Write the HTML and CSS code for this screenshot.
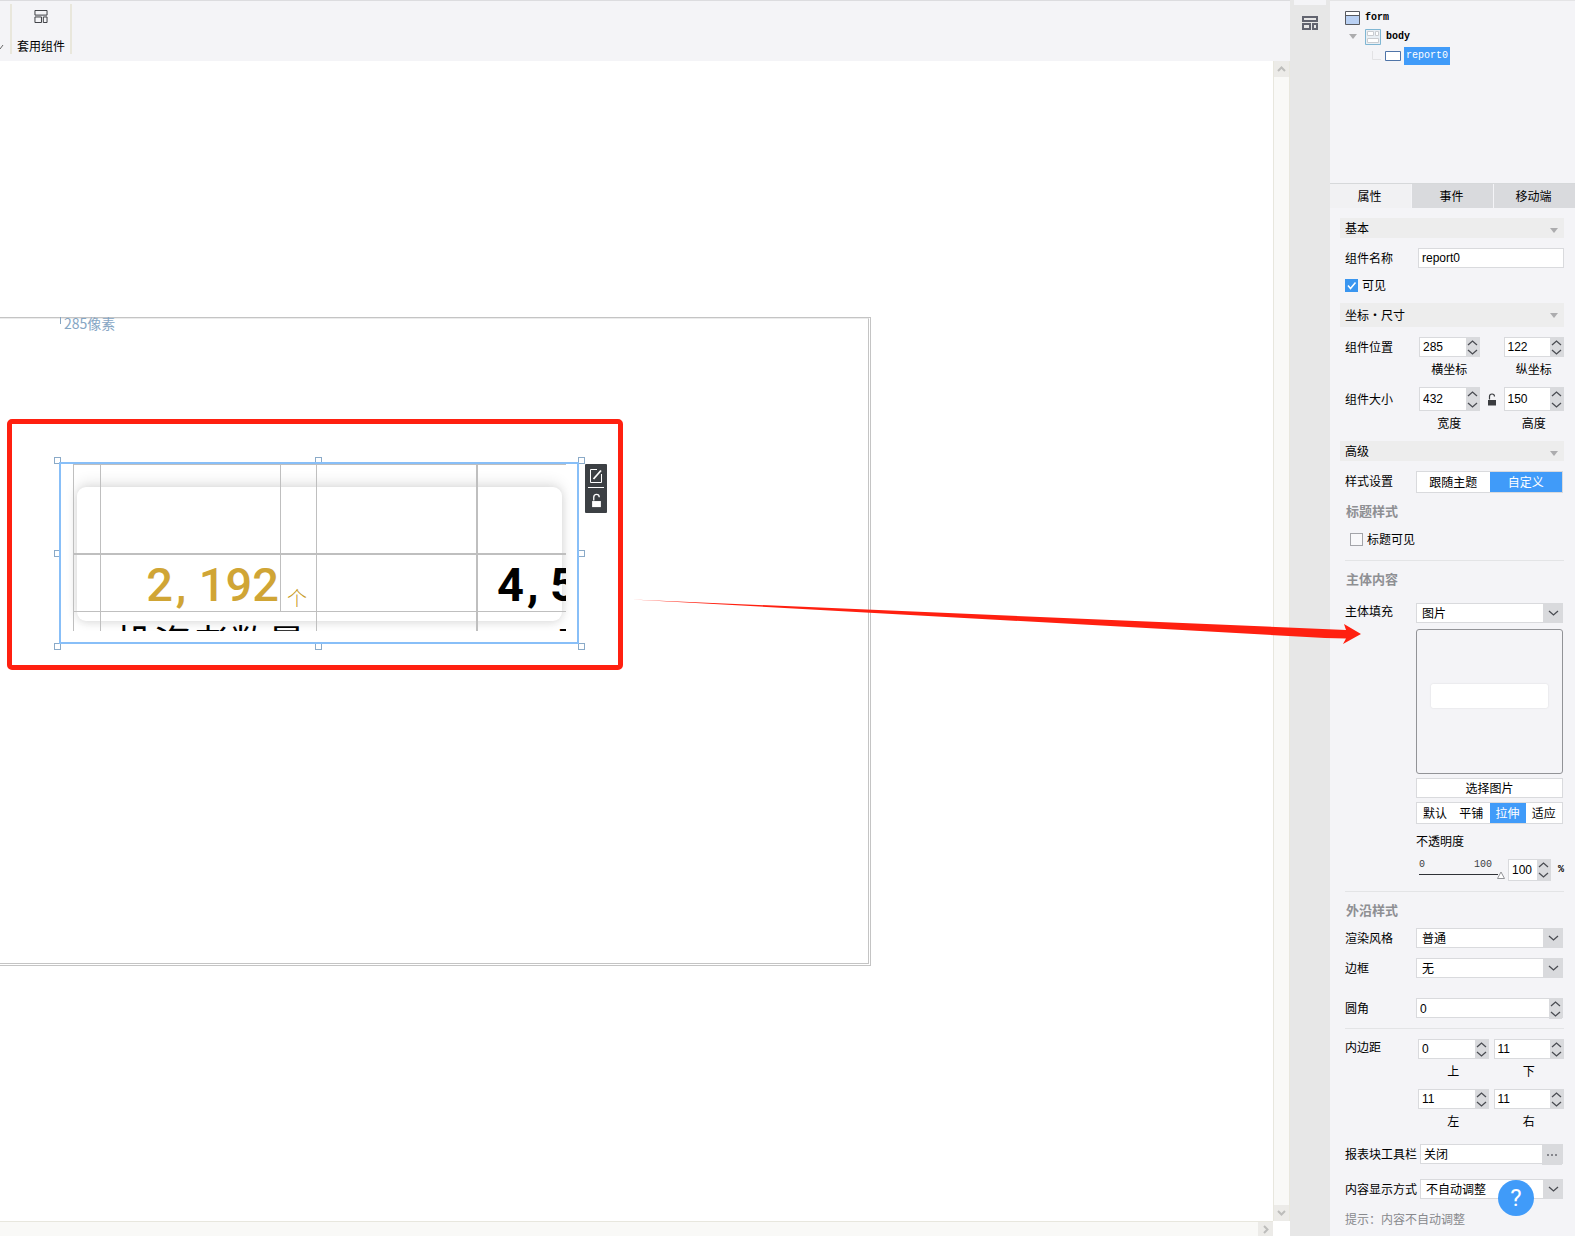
FILE: index.html
```html
<!DOCTYPE html>
<html lang="zh-CN">
<head>
<meta charset="utf-8">
<meta name="viewport" content="width=device-width, initial-scale=1">
<title>表单设计器</title>
<link rel="stylesheet" href="styles.css">
</head>
<body>
<svg class="defs" aria-hidden="true">
  <symbol id="up" viewBox="0 0 11 6"><path d="M1 5 5.500 1 10 5" fill="none" stroke="#4a4c52" stroke-width="1.300"/></symbol>
  <symbol id="down" viewBox="0 0 11 6"><path d="M1 1 5.500 5 10 1" fill="none" stroke="#4a4c52" stroke-width="1.300"/></symbol>
  <symbol id="tri" viewBox="0 0 8 5"><path d="M0 0h8L4 5z" fill="#acacae"/></symbol>
  <symbol id="lock" viewBox="0 0 10 13"><path d="M2.500 6.500V3.500Q2.500 1 5 1Q7.500 1 7.500 3.500" fill="none" stroke="currentColor" stroke-width="1.200"/><path d="M1 7h8V12.500H1z" fill="currentColor"/></symbol>
</svg>
<div class="app">
  <main class="workspace">
    <header class="toolbar">
      <span class="toolbar-more"><svg width="4" height="6" viewBox="0 0 4 6"><path d="M0 5 3 1" stroke="#666" fill="none"/></svg></span>
      <button class="tool" type="button">
        <svg width="14" height="14" viewBox="0 0 14 14" fill="none" stroke="#2f3136"><path d="M.5.5h13v5H.500zM.5 7.500h7v6h-7zM9.500 7.500h4v6h-4z"/></svg>
        <span>套用组件</span>
      </button>
    </header>
    <div class="stage">
      <div class="canvas">
        <div class="form-frame"><div class="form-inner"></div></div>
        <span class="ruler">285像素</span>
        <i class="handle h-tl"></i><i class="handle h-tc"></i><i class="handle h-tr"></i>
        <i class="handle h-ml"></i><i class="handle h-mr"></i>
        <i class="handle h-bl"></i><i class="handle h-bc"></i><i class="handle h-br"></i>
        <section class="report">
          <div class="card"></div>
          <div class="sheet">
            <table>
              <colgroup><col class="c1"><col class="c2"><col class="c3"><col class="c4"><col class="c5"></colgroup>
              <tr class="r1"><td></td><td></td><td></td><td></td><td class="thick"></td></tr>
              <tr class="r2"><td></td><td class="num gold">2<span class="comma">,</span>192</td><td class="unit">个</td><td></td><td class="num thick dark">4<span class="comma">,</span>5</td></tr>
              <tr class="r3"><td></td><td class="caption-cell" colspan="2">投资者数量</td><td></td><td class="thick next-cell">工</td></tr>
            </table>
          </div>
        </section>
        <div class="quick">
          <button type="button" aria-label="编辑"><svg width="14" height="14" viewBox="0 0 14 14" fill="none" stroke="#fff"><path d="M8 .500H1.500v13H12.500V5"/><path d="M4.500 10 12 1.500" stroke-width="1.800"/></svg></button>
          <button type="button" aria-label="锁定"><svg width="11" height="15"><use href="#lock"/></svg></button>
        </div>
        <div class="marker"></div>
      </div>
      <div class="vscroll">
        <button type="button" aria-label="向上"><svg width="9" height="6" viewBox="0 0 9 6"><path d="M1 5 4.500 1.500 8 5"/></svg></button>
        <button type="button" aria-label="向下"><svg width="9" height="6" viewBox="0 0 9 6"><path d="M1 1 4.500 4.500 8 1"/></svg></button>
      </div>
      <div class="hscroll">
        <button type="button" aria-label="向右"><svg width="6" height="9" viewBox="0 0 6 9"><path d="M1 1 4.500 4.500 1 8"/></svg></button>
      </div>
    </div>
  </main>

  <nav class="rail">
    <button type="button" aria-label="组件"><svg width="16" height="14" viewBox="0 0 16 14" fill="none" stroke="#62646f" stroke-width="2"><path d="M1 1h14v4H1zM1 8h7v5H1zM11 8h4v5h-4z"/></svg></button>
  </nav>

  <aside class="panel">
    <div class="tree">
      <div class="node">
        <svg width="15" height="14" viewBox="0 0 15 14"><path d="M.5.5h14v13H.500z" fill="#b9d0f3" stroke="#585a60"/><path d="M1 1h13v3H1z" fill="#fff"/><path d="M1 4.500h13" stroke="#585a60"/></svg>
        <span>form</span>
      </div>
      <div class="node node-2">
        <svg class="twisty" width="8" height="5"><use href="#tri"/></svg>
        <svg width="16" height="16" viewBox="0 0 16 16"><path d="M.5.5h15v15H.500z" fill="#e9eff4" stroke="#7fb6d3"/><path d="M2.500 2.500h6v4h-6zM10.500 2.500h3v4h-3zM2.500 9.500h11v4h-11z" fill="#fff" stroke="#c9ccd0"/></svg>
        <span>body</span>
      </div>
      <div class="node node-3">
        <svg width="10" height="10" viewBox="0 0 10 10"><path d="M.5 0v8.500H9" fill="none" stroke="#e2e2e4"/></svg>
        <svg width="16" height="10" viewBox="0 0 16 10"><path d="M.5.5h15v9H.500z" fill="#fff" stroke="#4f74a8"/></svg>
        <span class="selected">report0</span>
      </div>
    </div>

    <div class="tabs" role="tablist">
      <button type="button" role="tab" class="active" aria-selected="true">属性</button>
      <button type="button" role="tab">事件</button>
      <button type="button" role="tab">移动端</button>
    </div>

    <form class="props">
      <h2 class="sec">基本<svg width="8" height="5"><use href="#tri"/></svg></h2>
      <div class="row mid"><label for="name">组件名称</label><input class="box" id="name" type="text" value="report0"></div>
      <label class="check"><input type="checkbox" checked><span>可见</span></label>

      <h2 class="sec tall after-check">坐标·尺寸<svg width="8" height="5"><use href="#tri"/></svg></h2>
      <div class="row mid">
        <span>组件位置</span>
        <div class="pair">
          <div class="cell"><div class="spin"><input id="px" type="text" value="285"><span class="steps"><button type="button" aria-label="增"><svg><use href="#up"/></svg></button><button type="button" aria-label="减"><svg><use href="#down"/></svg></button></span></div><label for="px">横坐标</label></div>
          <span class="link"></span>
          <div class="cell"><div class="spin"><input id="py" type="text" value="122"><span class="steps"><button type="button" aria-label="增"><svg><use href="#up"/></svg></button><button type="button" aria-label="减"><svg><use href="#down"/></svg></button></span></div><label for="py">纵坐标</label></div>
        </div>
      </div>
      <div class="row mid big">
        <span>组件大小</span>
        <div class="pair">
          <div class="cell"><div class="spin"><input id="w" type="text" value="432"><span class="steps"><button type="button" aria-label="增"><svg><use href="#up"/></svg></button><button type="button" aria-label="减"><svg><use href="#down"/></svg></button></span></div><label for="w">宽度</label></div>
          <span class="link"><svg width="10" height="13"><use href="#lock"/></svg></span>
          <div class="cell"><div class="spin"><input id="h" type="text" value="150"><span class="steps"><button type="button" aria-label="增"><svg><use href="#up"/></svg></button><button type="button" aria-label="减"><svg><use href="#down"/></svg></button></span></div><label for="h">高度</label></div>
        </div>
      </div>

      <h2 class="sec">高级<svg width="8" height="5"><use href="#tri"/></svg></h2>
      <div class="row"><span>样式设置</span><div class="seg"><button type="button">跟随主题</button><button type="button" class="on">自定义</button></div></div>
      <h3>标题样式</h3>
      <label class="check indent"><input type="checkbox"><span>标题可见</span></label>

      <hr class="after-check-line">
      <h3>主体内容</h3>
      <div class="row body-fill raised">
        <label for="fill">主体填充</label>
        <div class="stack">
          <div class="select"><select id="fill"><option>图片</option></select><svg><use href="#down"/></svg></div>
          <div class="preview"><div></div></div>
          <button type="button" class="box pick">选择图片</button>
          <div class="seg four"><button type="button">默认</button><button type="button">平铺</button><button type="button" class="on">拉伸</button><button type="button">适应</button></div>
          <label class="opacity" for="op">不透明度</label>
          <div class="opacity-row">
            <div class="slider"><div class="scale"><span>0</span><span>100</span></div><input id="op" type="range" min="0" max="100" value="100"></div>
            <div class="spin"><input type="text" value="100" aria-label="不透明度数值"><span class="steps"><button type="button" aria-label="增"><svg><use href="#up"/></svg></button><button type="button" aria-label="减"><svg><use href="#down"/></svg></button></span></div>
            <span class="pct">%</span>
          </div>
        </div>
      </div>

      <hr>
      <h3>外沿样式</h3>
      <div class="row"><label for="render">渲染风格</label><div class="select"><select id="render"><option>普通</option></select><svg><use href="#down"/></svg></div></div>
      <div class="row"><label for="border">边框</label><div class="select"><select id="border"><option>无</option></select><svg><use href="#down"/></svg></div></div>
      <div class="row apart"><label for="radius">圆角</label><div class="spin"><input id="radius" type="text" value="0"><span class="steps"><button type="button" aria-label="增"><svg><use href="#up"/></svg></button><button type="button" aria-label="减"><svg><use href="#down"/></svg></button></span></div></div>

      <hr>
      <div class="row mid raised">
        <span>内边距</span>
        <div class="quad">
          <div class="cell"><div class="spin"><input id="pt" type="text" value="0"><span class="steps"><button type="button" aria-label="增"><svg><use href="#up"/></svg></button><button type="button" aria-label="减"><svg><use href="#down"/></svg></button></span></div><label for="pt">上</label></div>
          <div class="cell"><div class="spin"><input id="pb" type="text" value="11"><span class="steps"><button type="button" aria-label="增"><svg><use href="#up"/></svg></button><button type="button" aria-label="减"><svg><use href="#down"/></svg></button></span></div><label for="pb">下</label></div>
          <div class="cell"><div class="spin"><input id="pl" type="text" value="11"><span class="steps"><button type="button" aria-label="增"><svg><use href="#up"/></svg></button><button type="button" aria-label="减"><svg><use href="#down"/></svg></button></span></div><label for="pl">左</label></div>
          <div class="cell"><div class="spin"><input id="pr" type="text" value="11"><span class="steps"><button type="button" aria-label="增"><svg><use href="#up"/></svg></button><button type="button" aria-label="减"><svg><use href="#down"/></svg></button></span></div><label for="pr">右</label></div>
        </div>
      </div>
      <div class="row wide"><label for="bar">报表块工具栏</label><div class="more"><input id="bar" type="text" value="关闭"><button type="button" aria-label="更多"><svg width="10" height="2" viewBox="0 0 10 2" fill="#85868c"><path d="M0 0h2v2H0zM4 0h2v2H4zM8 0h2v2H8z"/></svg></button></div></div>
      <div class="row wide"><label for="mode">内容显示方式</label><div class="select"><select id="mode"><option>不自动调整</option></select><svg><use href="#down"/></svg></div></div>
      <p class="hint">提示：内容不自动调整</p>
    </form>
  </aside>

  <svg class="arrow" width="730" height="50" viewBox="0 0 730 50" aria-hidden="true"><path d="M0 3.500 714 34 712 28 729 38 711 48 714 42.500 693 42z" fill="#ff2010"/></svg>
  <button class="help" type="button">?</button>
</div>
</body>
</html>
```
FILE: styles.css
```css
* { box-sizing: border-box; }
body {
  margin: 0;
  background: #fff;
  color: #000;
  font: 12px/16px "Noto Sans CJK SC", sans-serif;
}
button, input, select { font: inherit; color: inherit; margin: 0; padding: 0; border: 0; border-radius: 0; background: none; }
input { min-width: 0; }
svg { display: block; }
.defs { position: absolute; width: 0; height: 0; }

.app {
  position: relative;
  display: grid;
  grid-template-columns: minmax(0, 1fr) 40px 245px;
  min-height: 100vh;
  overflow: hidden;
}

/* workspace */
.workspace { display: flex; flex-direction: column; min-width: 0; }
.toolbar {
  display: flex;
  height: 61px;
  padding-top: 3px;
  background: #f4f4f7;
  border-top: 1px solid #dcdcdf;
}
.toolbar-more { width: 10px; padding-top: 40px; }
.tool {
  display: flex;
  flex-direction: column;
  align-items: center;
  gap: 15px;
  width: 62px;
  height: 50px;
  padding-top: 6px;
  border: solid #e9e7dc;
  border-width: 0 2px;
}
.stage {
  flex: 1;
  display: grid;
  grid-template-columns: minmax(0, 1fr) 17px;
  grid-template-rows: 1fr 15px;
}
.canvas { position: relative; overflow: hidden; background: #fff; }
.vscroll {
  display: flex;
  flex-direction: column;
  justify-content: space-between;
  background: #f9f9f7;
  border: solid #e8e7de;
  border-width: 0 1px;
}
.hscroll {
  display: flex;
  justify-content: flex-end;
  background: #f9f9f7;
  border-top: 1px solid #e8e7de;
}
.vscroll button, .hscroll button { display: grid; place-items: center; height: 16px; width: 15px; background: #ecebe8; }
.hscroll button { height: 100%; }
.vscroll path, .hscroll path { fill: none; stroke: #bdbdbb; stroke-width: 2; }

/* free canvas items */
.form-frame { position: absolute; left: -3px; top: 256px; width: 874px; height: 649px; padding: 0 1px 1px 0; border: 1px solid #c4c4c4; }
.form-inner { height: 100%; border: 1px solid #c4c4c4; border-top-color: #ececec; }
.ruler { position: absolute; left: 60px; top: 256px; height: 16px; padding-left: 4px; color: #86a6c4; font-size: 14px; line-height: 12px; }
.ruler::before { content: ""; position: absolute; left: 0; top: 0; width: 1px; height: 7px; background: #86a6c4; }
.handle { position: absolute; width: 7px; height: 7px; border: 1px solid #8aaac8; background: #fff; }
.h-tl, .h-ml, .h-bl { left: 54px; }
.h-tc, .h-bc { left: 315px; }
.h-tr, .h-mr, .h-br { left: 578px; }
.h-tl, .h-tc, .h-tr { top: 396px; }
.h-ml, .h-mr { top: 489px; }
.h-bl, .h-bc, .h-br { top: 582px; }
.report {
  position: absolute;
  left: 59px;
  top: 401px;
  width: 520px;
  height: 182px;
  padding: 0 11px 11px 12px;
  border: 2px solid #88bff8;
  background: #fff;
  overflow: hidden;
}
.card {
  position: absolute;
  inset: 23px 15px 21px 16px;
  border-radius: 9px;
  background: #fff;
  box-shadow: 0 -5px 14px rgba(0, 0, 0, .09), 0 2px 10px rgba(0, 0, 0, .12);
}
.sheet { position: relative; height: 167px; overflow: hidden; }
.sheet table { width: 583px; table-layout: fixed; border-spacing: 0; }
.c1 { width: 27px; }
.c2 { width: 180px; }
.c3 { width: 36px; }
.c4 { width: 160px; }
.c5 { width: 180px; }
.sheet td { padding: 0; border: solid #bfbfbf; border-width: 1px 0 0 1px; vertical-align: top; white-space: nowrap; }
.sheet .thick { border-left-width: 2px; }
.r1 { height: 89px; }
.r2 { height: 58px; }
.sheet .r2 td { border-top-width: 2px; }
.r3 { height: 60px; }
.sheet .num { padding: 4px 1px 0 0; font: 500 47px/52px Roboto, sans-serif; text-align: right; }
.sheet .gold { color: #d0a535; }
.sheet .dark { padding-left: 19px; font-weight: 700; text-align: left; }
.comma { display: inline-block; width: 26px; padding-left: 3px; text-align: left; }
.sheet .unit { padding: 30px 0 0 6px; color: #c79a1e; font-size: 20px; font-weight: 300; line-height: 26px; }
.sheet .caption-cell { padding-left: 4px; font-size: 38px; line-height: 58px; text-align: center; }
.sheet .next-cell { padding-left: 78px; font-size: 38px; line-height: 58px; }
.quick { position: absolute; left: 585px; top: 403px; width: 22px; padding: 0 3px; border-radius: 1px; background: #3c4044; color: #fff; }
.quick button { display: grid; place-items: center; width: 16px; height: 24px; }
.quick button:first-child { border-bottom: 1px solid #fff; }
.quick button:last-child { height: 25px; }
.marker { position: absolute; left: 7px; top: 358px; width: 616px; height: 251px; border: 5px solid #ff2010; border-radius: 5px; }

.rail { padding: 16px 12px; background: linear-gradient(#f4f4f7, #f4f4f7) center top / 32px 5px no-repeat #e7e7e7; }

/* property panel */
.panel { background: #f4f4f7; }
.tree {
  height: 183px;
  padding: 7px 0 0 15px;
  border-top: 1px solid #e4e4e6;
  font: bold 10px/18px "Liberation Mono", monospace;
}
.node { display: flex; align-items: center; gap: 5px; height: 19px; }
.node-2 { padding-left: 4px; }
.node-2 .twisty { margin-right: 3px; }
.node-3 { padding-left: 27px; gap: 3px; }
.selected { height: 18px; padding: 0 2px; background: #409bf9; color: #fff; font-weight: 400; }
.tabs { display: grid; grid-template-columns: repeat(3, 1fr); gap: 1px; border-top: 1px solid #d6d8da; }
.tabs button { height: 24px; padding-right: 2px; background: #d9dadd; }
.tabs .active { background: #f1f1f3; }

.props { padding: 0 11px 9px 15px; }
.sec {
  display: flex;
  align-items: center;
  justify-content: space-between;
  height: 20px;
  margin: 10px 0 0 -5px;
  padding: 0 6px 0 5px;
  background: #ededed;
  font-size: 12px;
  font-weight: 400;
}
.sec.tall { height: 24px; }
.sec svg { margin-top: 4px; }
.sec.tall svg { margin-top: 0; }
.sec.after-check { margin-top: 11px; }
.row { display: grid; grid-template-columns: 71px minmax(0, 1fr); margin-top: 10px; padding-right: 1px; line-height: 20px; }
.row.mid { grid-template-columns: 73px minmax(0, 1fr); padding-right: 0; }
.row.big > span { line-height: 24px; }
.row.wide { grid-template-columns: 75px minmax(0, 1fr); margin-top: 15px; white-space: nowrap; }
.row.apart { margin-top: 20px; }
.row.body-fill { margin-top: 16px; }
.row.raised > :first-child { line-height: 16px; }
.box { width: 100%; height: 20px; border: 1px solid #d9dadd; background: #fff; }
input[type="text"] { padding-left: 3px; font-family: "Liberation Sans", "Noto Sans CJK SC", sans-serif; }
.check { display: flex; align-items: center; gap: 4px; height: 14px; margin-top: 10px; }
.check.indent { margin: 13px 0 0 5px; }
.check input { appearance: none; width: 13px; height: 13px; border: 1px solid #a3a4a9; background: #f8f8fa; }
.check input:checked {
  border-color: #3a96f0;
  background: #3a96f0 url("data:image/svg+xml,%3Csvg xmlns='http://www.w3.org/2000/svg' viewBox='0 0 11 11'%3E%3Cpath d='M2 5.500 4.500 8.500 9.500 2.500' fill='none' stroke='white' stroke-width='1.500'/%3E%3C/svg%3E");
}
.spin { display: grid; grid-template-columns: minmax(0, 1fr) 13px; width: 100%; height: 20px; border: 1px solid #d9dadd; background: #fff; }
.steps { display: flex; flex-direction: column; justify-content: space-between; background: #d9dadd; }
.steps button { display: grid; place-items: center; flex: 1; }
.steps svg { width: 11px; height: 6px; }
.big .spin { height: 24px; }
.pair { display: grid; grid-template-columns: minmax(0, 1fr) 24px minmax(0, 1fr); }
.row.mid .pair { padding-left: 1px; }
.link { display: grid; place-items: center; height: 24px; color: #3a3c40; }
.cell { display: flex; flex-direction: column; align-items: center; gap: 4px; line-height: 16px; }
.quad { display: grid; grid-template-columns: repeat(2, minmax(0, 1fr)); gap: 10px 5px; }
.seg { display: grid; grid-template-columns: 1fr 1fr; height: 22px; border: 1px solid #d9dadd; background: #fff; }
.seg.four { grid-template-columns: repeat(4, 1fr); }
.seg .on { background: #409bf9; color: #fff; }
h3 { margin: 10px 0 0 1px; color: #8e8f93; font-size: 13px; font-weight: 700; line-height: 16px; }
hr { height: 1px; margin: 10px 0 0; border: 0; background: #e3e4e6; }
hr.after-check-line { margin-top: 14px; }
.select { display: grid; grid-template-columns: minmax(0, 1fr) 20px; height: 20px; background: #d9dadd; }
.select select { grid-area: 1 / 1 / 2 / 3; appearance: none; padding: 0 24px 0 5px; border: 1px solid #d9dadd; background: linear-gradient(#d9dadd, #d9dadd) right / 19px 100% no-repeat #fff; line-height: 18px; }
.select svg { grid-area: 1 / 2; place-self: center; width: 11px; height: 6px; pointer-events: none; }
.stack { display: flex; flex-direction: column; gap: 4px; }
.preview { display: grid; place-items: center; height: 145px; margin-top: 2px; padding: 0 14px 12px; border: 1px solid #929397; border-radius: 3px; }
.preview div { width: 100%; height: 24px; border-radius: 2px; background: #fff; box-shadow: 0 0 2px rgba(0, 0, 0, .12); }
.pick { line-height: 18px; }
.opacity { margin-top: 5px; line-height: 16px; }
.opacity-row { display: grid; grid-template-columns: 85px 43px 1fr; gap: 7px; margin-top: 6px; }
.opacity-row .spin { height: 22px; }
.slider { margin-right: -4px; padding-left: 3px; }
.scale { display: flex; justify-content: space-between; padding-right: 13px; font: 10px/12px "Liberation Mono", monospace; color: #3c3e42; }
input[type="range"] { appearance: none; display: block; width: 100%; height: 8px; background: linear-gradient(#2f3136, #2f3136) 0 3px / 79px 1px no-repeat; }
input[type="range"]::-webkit-slider-thumb {
  appearance: none;
  width: 8px;
  height: 8px;
  background: url("data:image/svg+xml,%3Csvg xmlns='http://www.w3.org/2000/svg' viewBox='0 0 8 8'%3E%3Cpath d='M4 1 7.500 7.500H.500z' fill='%23fff' stroke='%23929397'/%3E%3C/svg%3E") no-repeat;
}
.pct { font: bold 10px/22px "Liberation Mono", monospace; }
.more { display: grid; grid-template-columns: minmax(0, 1fr) 20px; height: 20px; border: 1px solid #d9dadd; background: #fff; }
.more button { display: grid; place-items: center; background: #d9dadd; }
.hint { margin: 12px 0 0; color: #88898d; }

/* overlays */
.arrow { position: absolute; left: 632px; top: 596px; pointer-events: none; }
.help {
  position: absolute;
  right: 41px;
  top: 1180px;
  width: 36px;
  height: 36px;
  border-radius: 50%;
  background: #409bf9;
  color: #fff;
  font: 24px/36px Roboto, sans-serif;
}
```
